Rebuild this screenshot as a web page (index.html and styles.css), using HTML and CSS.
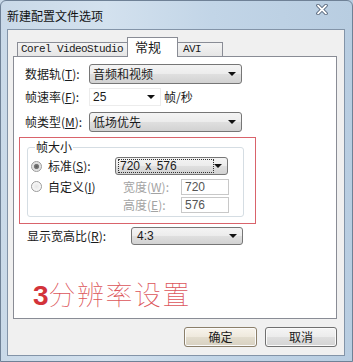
FILE: index.html
```html
<!DOCTYPE html>
<html lang="zh-CN">
<head>
<meta charset="utf-8">
<link rel="stylesheet" href="styles.css">
</head>
<body>
<div class="window">
  <div class="titlebar">
    <span class="title">新建配置文件选项</span>
    <svg class="close" width="12" height="11" viewBox="0 0 12 11"><path d="M2 1.5 L10 9.5 M10 1.5 L2 9.5" stroke="#44546a" stroke-width="3.4" stroke-linecap="round"/><path d="M2 1.5 L10 9.5 M10 1.5 L2 9.5" stroke="#ffffff" stroke-width="1.8" stroke-linecap="round"/></svg>
  </div>
  <div class="client">
    <div class="tabs">
      <div class="tab tab-corel">Corel VideoStudio</div>
      <div class="tab tab-active">常规</div>
      <div class="tab tab-avi">AVI</div>
    </div>
    <div class="panel">
      <div class="row row1">
        <span class="lbl">数据轨(<u>T</u>):</span>
        <div class="combo combo-wide"><span>音频和视频</span><span class="arrow"></span></div>
      </div>
      <div class="row row2">
        <span class="lbl">帧速率(<u>F</u>):</span>
        <div class="editcombo"><span class="num">25</span><span class="arrow"></span></div>
        <span class="unit">帧/秒</span>
      </div>
      <div class="row row3">
        <span class="lbl">帧类型(<u>M</u>):</span>
        <div class="combo combo-wide"><span>低场优先</span><span class="arrow"></span></div>
      </div>
      <fieldset class="group">
        <legend class="legend">帧大小</legend>
        <div class="grid">
          <div class="opt"><span class="radio radio-on"></span><span>标准(<u>S</u>):</span></div>
          <div class="combo combo-size"><span class="focus">720 x 576</span><span class="arrow"></span></div>
          <div class="opt opt2"><span class="radio"></span><span>自定义(<u>I</u>)</span></div>
          <span class="dis dis-w">宽度(<u>W</u>):</span>
          <div class="edit edit-w">720</div>
          <span class="dis dis-h">高度(<u>E</u>):</span>
          <div class="edit edit-h">576</div>
        </div>
      </fieldset>
      <div class="row aspect">
        <span class="lbl lbl-aspect">显示宽高比(<u>R</u>):</span>
        <div class="combo combo-aspect"><span class="num">4:3</span><span class="arrow"></span></div>
      </div>
      <div class="caption"><b>3</b>分辨率设置</div>
      <div class="mark"></div>
    </div>
    <div class="buttons">
      <div class="btn btn-ok">确定</div>
      <div class="btn">取消</div>
    </div>
  </div>
</div>
</body>
</html>
```

FILE: styles.css
```css
* { box-sizing: border-box; }
html, body { margin: 0; padding: 0; }
body {
  width: 353px;
  height: 362px;
  overflow: hidden;
  font-family: "Noto Sans CJK SC", "Liberation Sans", sans-serif;
  font-size: 12px;
  line-height: 14px;
  color: #1a1a1a;
  background: linear-gradient(90deg, #c9d9e8 0%, #d3e1ee 30%, #c2d5e7 60%, #b8cde1 100%);
}
.window {
  display: flex;
  flex-direction: column;
  height: 362px;
  border: 1px solid #6f8196;
  border-radius: 6px 6px 0 0;
}
.titlebar {
  height: 28px;
  display: flex;
  justify-content: space-between;
  align-items: flex-start;
  padding: 0 24px 0 6px;
}
.title {
  margin-top: 8px;
  font-size: 12px;
  line-height: 14px;
  color: #111;
}
.close { margin-top: 3px; }
.client {
  margin: 0 7px 0 6px;
  height: 327px;
  background: #f0f0f0;
  border: 1px solid #8394a8;
  padding: 8px 7px 0 5px;
  display: flex;
  flex-direction: column;
}
.tabs {
  display: flex;
  align-items: flex-end;
  height: 18px;
  padding-left: 4px;
}
.tab {
  height: 14px;
  border: 1px solid #898c95;
  border-bottom: none;
  background: linear-gradient(#f3f3f3, #e6e6e6);
  line-height: 12px;
  margin-right: -1px;
  white-space: nowrap;
}
.tab-corel {
  width: 111px;
  padding-left: 3px;
  font-family: "Liberation Mono", monospace;
  font-size: 11px;
  letter-spacing: -0.6px;
  line-height: 13px;
}
.tab-active {
  width: 51px;
  height: 20px;
  margin-bottom: -1px;
  position: relative;
  z-index: 1;
  background: #fff;
  padding: 1px 0 0 7px;
  font-size: 13px;
  line-height: 16px;
}
.tab-avi {
  width: 46px;
  padding-left: 5px;
  font-family: "Liberation Mono", monospace;
  font-size: 11px;
  letter-spacing: -0.6px;
  line-height: 13px;
}
.panel {
  position: relative;
  height: 263px;
  background: #fff;
  border: 1px solid #898c95;
  padding: 7px 0 0 11px;
}
.row {
  display: flex;
  align-items: center;
}
.lbl { width: 64px; white-space: nowrap; }
.row1 { height: 20px; }
.row2 { height: 18px; margin-top: 4px; }
.row3 { height: 20px; margin-top: 6px; }
.combo {
  display: flex;
  align-items: center;
  justify-content: space-between;
  border: 1px solid #767676;
  border-radius: 3px;
  background: linear-gradient(#f4f4f4, #ececec 48%, #dfdfdf 52%, #d2d2d2);
  padding: 0 5px 0 3px;
  height: 20px;
}
.combo-wide { width: 153px; }
.arrow {
  width: 0;
  height: 0;
  border-left: 4px solid transparent;
  border-right: 4px solid transparent;
  border-top: 4px solid #111;
}
.num { font-family: "Liberation Sans", sans-serif; font-size: 12px; }
.editcombo {
  display: flex;
  align-items: center;
  justify-content: space-between;
  width: 72px;
  height: 18px;
  border: 1px solid #ececec;
  padding: 0 5px 0 3px;
}
.unit { margin-left: 3px; }
.group {
  margin: 8px 0 0 2px;
  width: 217px;
  border: 1px solid #d5dde3;
  border-radius: 3px;
  padding: 3px 0 9px 3px;
  min-width: 0;
}
.legend {
  padding: 0 1px;
  margin-left: 4px;
  line-height: 14px;
}
.grid {
  display: grid;
  grid-template-columns: 84px 8px 58px 48px;
  grid-template-rows: 18px 16px 16px;
  row-gap: 0;
  align-items: center;
}
.opt { display: flex; align-items: center; gap: 6px; grid-column: 1; grid-row: 1; }
.opt2 { grid-row: 2; margin-top: 7px; }
.radio {
  width: 11px;
  height: 11px;
  border-radius: 50%;
  border: 1px solid #9b9b9b;
  background: radial-gradient(circle, #e6e6e6 0, #f8f8f8 70%);
}
.radio-on {
  background: radial-gradient(circle, #5a5a5a 0, #7a7a7a 2.2px, #dcdcdc 3px, #f4f4f4 100%);
}
.combo-size {
  grid-column: 2 / 5;
  grid-row: 1;
  height: 18px;
  width: 113px;
  padding: 0 5px 0 2px;
}
.focus {
  font-family: "Liberation Sans", sans-serif;
  border: 1px dotted #333;
  padding: 0 36px 0 1px;
  line-height: 12px;
  word-spacing: 2px;
  white-space: nowrap;
}
.dis { color: #a3a3a3; grid-column: 3; white-space: nowrap; }
.dis-w { grid-row: 2; margin-top: 7px; }
.dis-h { grid-row: 3; margin-top: 12px; }
.edit {
  grid-column: 4;
  height: 16px;
  border: 1px solid #c8c8c8;
  font-family: "Liberation Sans", sans-serif;
  color: #555;
  padding-left: 3px;
  line-height: 14px;
}
.edit-w { grid-row: 2; margin-top: 7px; }
.edit-h { grid-row: 3; margin-top: 12px; }
.aspect { height: 18px; margin: 10px 0 0 2px; }
.lbl-aspect { width: 104px; }
.combo-aspect { width: 112px; height: 18px; padding-left: 5px; }
.caption {
  margin: 34px 0 0 8px;
  font-size: 27px;
  line-height: 30px;
  color: #dc545a;
  font-weight: 100;
  letter-spacing: 1.5px;
}
.caption b { color: #d3333a; font-family: "Liberation Sans", sans-serif; font-weight: bold; font-size: 28px; letter-spacing: 0; }
.mark {
  position: absolute;
  left: 5px;
  top: 80px;
  width: 237px;
  height: 87px;
  border: 1px solid #d9636b;
}
.buttons {
  display: flex;
  justify-content: flex-end;
  gap: 8px;
  margin-top: 8px;
}
.btn {
  width: 72px;
  height: 20px;
  border: 1px solid #707070;
  border-radius: 3px;
  background: linear-gradient(#f5f5f5, #ececec 48%, #dedede 52%, #d4d4d4);
  text-align: center;
  line-height: 17px;
  box-shadow: inset 0 0 0 1px #fbfbfb;
}
.btn-ok {
  width: 73px;
  border-color: #8b7f6a;
  background: linear-gradient(#f8f4ec, #efe9dd 48%, #e2dccd 52%, #d8d1c1);
}
```
